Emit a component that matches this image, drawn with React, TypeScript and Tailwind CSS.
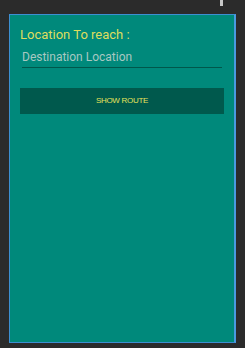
export default function App() {
  return (
    <div className="relative w-[245px] h-[348px] bg-[#2b2b2b] pt-[14px] pl-[9px] font-['Roboto',sans-serif]">
      {/* scrollbar tick at top */}
      <div className="absolute left-[220px] top-0 w-[3px] h-[6px] bg-[#c8c8c8]" />
      <div className="w-[227px] h-[329px] bg-[#00897b] border border-[#3d8fd1] border-r-2 border-r-[#4a9ae0] px-[10px] pt-[12px]">
        <div className="text-[13px] leading-[16px] text-[#dedd5e]">Location To reach :</div>
        <div className="mt-[7px] mx-[2px] border-b border-[#00574b] pb-[3px] text-[12px] leading-[14px] text-[#a8c8c2]">
          Destination Location
        </div>
        <button className="mt-[20px] w-[204px] h-[26px] bg-[#00594d] font-['Liberation_Sans',sans-serif] text-[8px] tracking-[-0.3px] text-[#e6e35a]">
          SHOW ROUTE
        </button>
      </div>
    </div>
  );
}
